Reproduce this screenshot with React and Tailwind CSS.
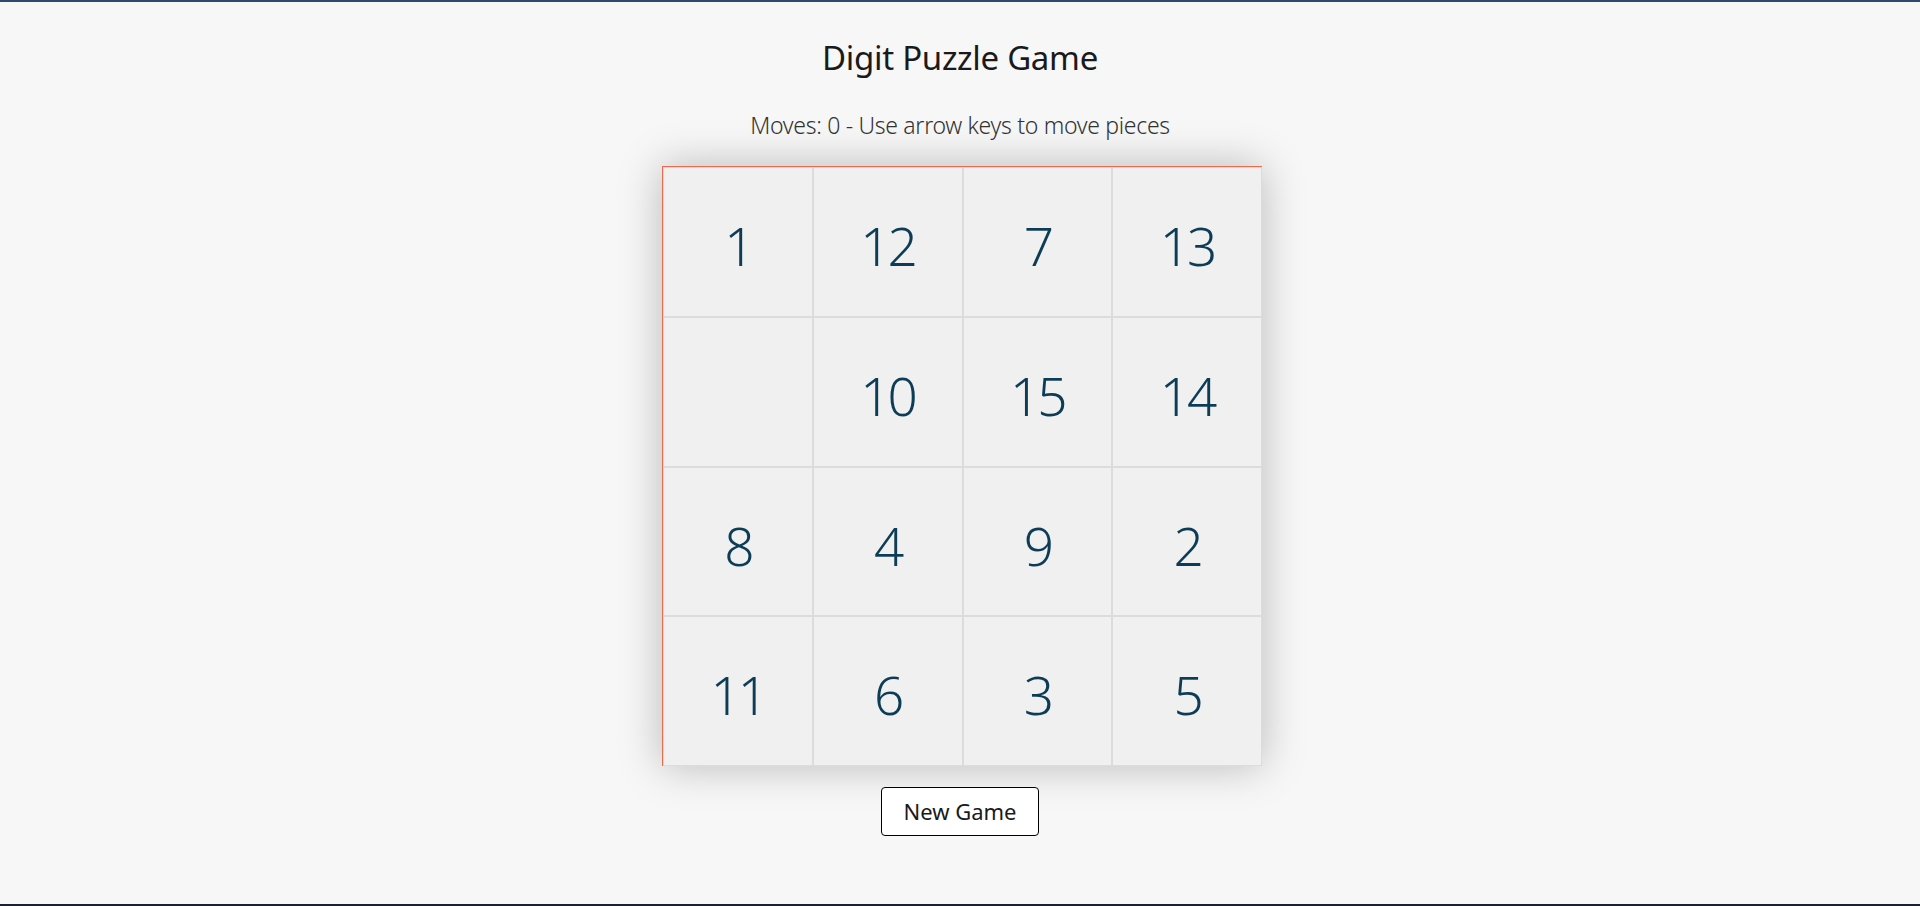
import React, { useState } from 'react';

const START = [1, 12, 7, 13, 0, 10, 15, 14, 8, 4, 9, 2, 11, 6, 3, 5];

function App() {
  const [tiles, setTiles] = useState(START);
  const [moves, setMoves] = useState(0);

  // shuffle board for a fresh game
  const newGame = () => {
    const next = [...START].sort(() => Math.random() - 0.5);
    setTiles(next);
    setMoves(0);
  };

  return (
    <div className="h-[906px] bg-[#f7f7f7] border-t-2 border-t-[#2c4a6b] border-b-2 border-b-[#1c2131] flex flex-col items-center font-['Noto_Sans',sans-serif]">
      <h1 className="mt-[28px] text-[33px] leading-[56px] text-[#1a1a1a] font-normal tracking-[-0.3px]">Digit Puzzle Game</h1>
      <p className="mt-[24px] text-[23px] leading-[30px] text-[#333] font-light tracking-[-0.3px]">
        Moves: {moves} - Use arrow keys to move pieces
      </p>
      <div className="mt-[26px] ml-[4px] w-[600px] h-[600px] grid grid-cols-4 border-t border-l border-[#ec6a50] shadow-[0_0_40px_rgba(0,0,0,0.25)]">
        {tiles.map((n, i) => (
          <div
            key={i}
            className="flex items-center justify-center pt-[8px] border border-[#dcdcdc] bg-[#f0f0f0] text-[53px] tracking-[-3px] text-[#0d3d56] font-light"
          >
            {n !== 0 ? n : ''}
          </div>
        ))}
      </div>
      <button
        onClick={newGame}
        className="mt-[21px] w-[158px] h-[49px] bg-white border border-black rounded-[4px] text-[22px] text-[#1a1a1a]"
      >
        New Game
      </button>
    </div>
  );
}

export default App;
